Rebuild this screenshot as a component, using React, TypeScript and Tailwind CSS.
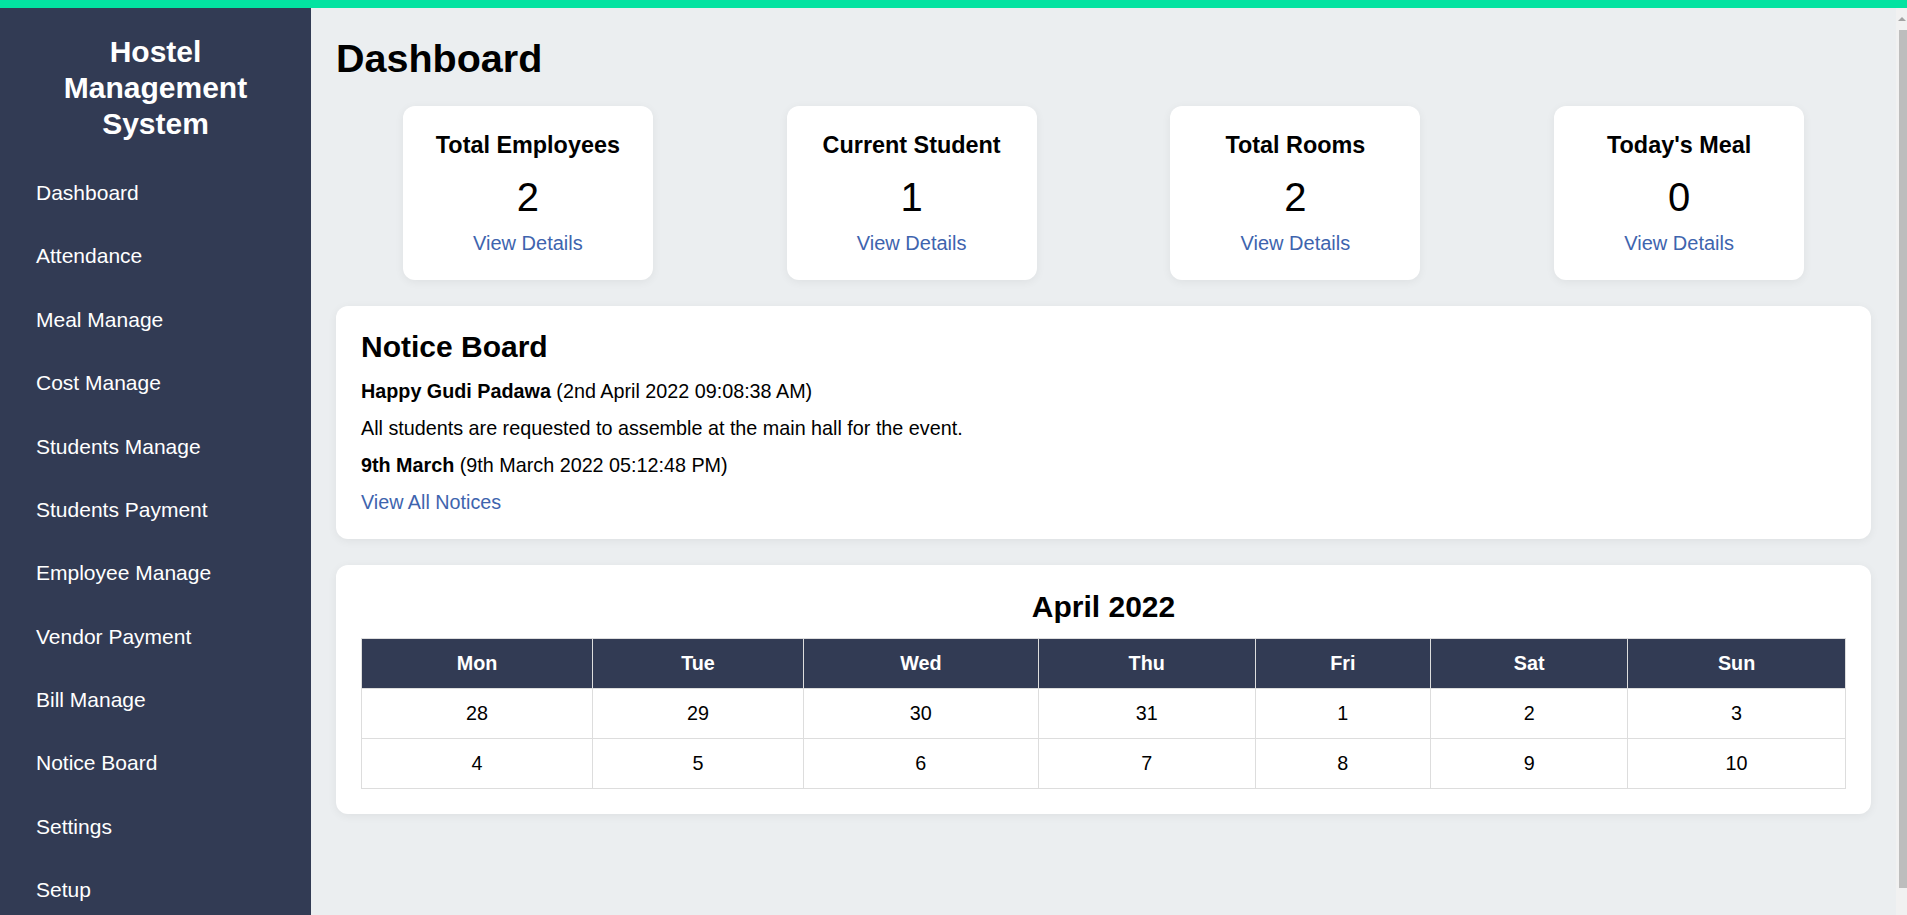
import React from 'react';

const menu = [
  'Dashboard',
  'Attendance',
  'Meal Manage',
  'Cost Manage',
  'Students Manage',
  'Students Payment',
  'Employee Manage',
  'Vendor Payment',
  'Bill Manage',
  'Notice Board',
  'Settings',
  'Setup',
];

const stats = [
  { title: 'Total Employees', value: 2 },
  { title: 'Current Student', value: 1 },
  { title: 'Total Rooms', value: 2 },
  { title: "Today's Meal", value: 0 },
];

// widths follow the auto table layout of the original page
const days = [
  { name: 'Mon', w: 'w-[15.58%]' },
  { name: 'Tue', w: 'w-[14.19%]' },
  { name: 'Wed', w: 'w-[15.84%]' },
  { name: 'Thu', w: 'w-[14.6%]' },
  { name: 'Fri', w: 'w-[11.84%]' },
  { name: 'Sat', w: 'w-[13.27%]' },
  { name: 'Sun', w: 'w-[14.68%]' },
];

const weeks = [
  [28, 29, 30, 31, 1, 2, 3],
  [4, 5, 6, 7, 8, 9, 10],
];

function Sidebar() {
  return (
    <aside className="w-[311px] shrink-0 bg-[#323b54] text-white overflow-hidden">
      <h2 className="pt-[26px] text-center text-[30px] leading-[36px] font-bold">
        <span className="block">Hostel</span>
        <span className="block">Management</span>
        <span className="block">System</span>
      </h2>
      <nav className="mt-[19px]">
        {menu.map((item) => (
          <div key={item} className="h-[63.4px] flex items-center pl-[36px] text-[21px] cursor-pointer">
            {item}
          </div>
        ))}
      </nav>
    </aside>
  );
}

function StatCard({ title, value }: { title: string; value: number }) {
  return (
    <div className="w-[250px] bg-white rounded-xl shadow-[0_2px_10px_rgba(0,0,0,0.06)] pt-[26px] pb-[25px] flex flex-col items-center text-black">
      <h3 className="text-[23.4px] leading-[27px] font-bold">{title}</h3>
      <div className="mt-[15px] text-[40px] leading-[46px]">{value}</div>
      <a className="mt-[12px] text-[20px] leading-[23px] text-[#3e64ae] cursor-pointer">View Details</a>
    </div>
  );
}

function NoticeBoard() {
  return (
    <div className="mt-[26px] bg-white rounded-xl shadow-[0_2px_10px_rgba(0,0,0,0.06)] px-[25px] pt-[24px] pb-[25px] text-black text-[19.75px] leading-[23px]">
      <h2 className="text-[30px] leading-[34.5px] font-bold">Notice Board</h2>
      <p className="mt-[15px]">
        <b>Happy Gudi Padawa</b> (2nd April 2022 09:08:38 AM)
      </p>
      <p className="mt-[14px]">All students are requested to assemble at the main hall for the event.</p>
      <p className="mt-[14px]">
        <b>9th March</b> (9th March 2022 05:12:48 PM)
      </p>
      <a className="block mt-[14px] text-[#3e64ae] cursor-pointer">View All Notices</a>
    </div>
  );
}

function Calendar() {
  return (
    <div className="mt-[26px] bg-white rounded-xl shadow-[0_2px_10px_rgba(0,0,0,0.06)] px-[25px] pt-[25px] pb-[25px] text-black">
      <h2 className="text-center text-[30px] leading-[34.5px] font-bold">April 2022</h2>
      <table className="mt-[14px] w-full table-fixed border-collapse text-[19.75px] leading-[23px]">
        <thead>
          <tr>
            {days.map((d) => (
              <th key={d.name} className={`${d.w} bg-[#323b54] text-white font-bold py-[13px] border border-[#dddddd]`}>
                {d.name}
              </th>
            ))}
          </tr>
        </thead>
        <tbody>
          {weeks.map((week, i) => (
            <tr key={i}>
              {week.map((day) => (
                <td key={day} className="text-center py-[13px] border border-[#dddddd]">
                  {day}
                </td>
              ))}
            </tr>
          ))}
        </tbody>
      </table>
    </div>
  );
}

export default function App() {
  return (
    <div className="h-screen w-full flex flex-col overflow-hidden font-['Liberation_Sans',Arial,sans-serif]">
      <div className="h-[8px] shrink-0 bg-[#03e3a1]" />
      <div className="flex flex-1 min-h-0">
        <Sidebar />
        <main className="flex-1 min-w-0 bg-[#ebeef0] px-[25px] overflow-hidden">
          <h1 className="mt-[27px] text-[39.5px] leading-[46px] font-bold text-black">Dashboard</h1>
          <div className="mt-[25px] flex justify-around">
            {stats.map((s) => (
              <StatCard key={s.title} title={s.title} value={s.value} />
            ))}
          </div>
          <NoticeBoard />
          <Calendar />
        </main>
        <div className="w-[11px] shrink-0 bg-[#f1f1f1] flex flex-col pb-[27px]">
          <div className="h-[22px] flex items-center justify-end pr-[1px]">
            <div className="w-0 h-0 border-l-[4px] border-r-[4px] border-b-[4px] border-l-transparent border-r-transparent border-b-[#a3a3a3]" />
          </div>
          <div className="flex-1 ml-[3px] bg-[#bdbdbd]" />
        </div>
      </div>
    </div>
  );
}
